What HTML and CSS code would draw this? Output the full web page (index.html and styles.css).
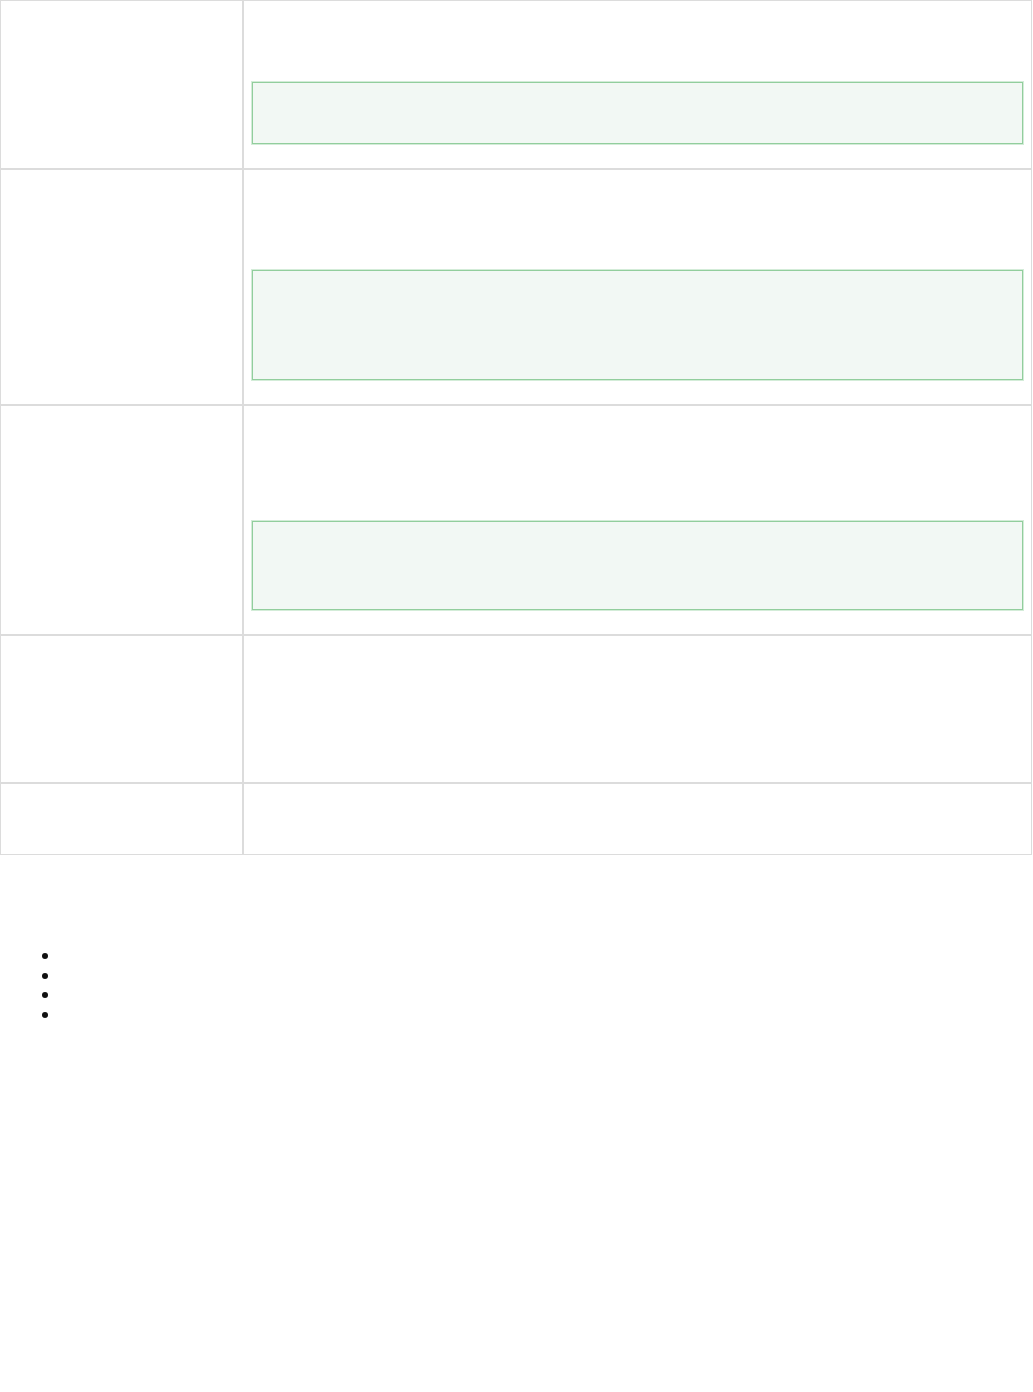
FILE: index.html
```html
<!DOCTYPE html>
<html lang="en">
<head>
<meta charset="utf-8">
<title>Table</title>
<link rel="stylesheet" href="styles.css">
</head>
<body>
<main class="page">
  <table class="grid">
    <tbody>
      <tr class="row row-1">
        <td class="label"></td>
        <td class="value">
          <div class="desc desc-1"></div>
          <div class="code code-1"></div>
        </td>
      </tr>
      <tr class="row row-2">
        <td class="label"></td>
        <td class="value">
          <div class="desc desc-2"></div>
          <div class="code code-2"></div>
        </td>
      </tr>
      <tr class="row row-3">
        <td class="label"></td>
        <td class="value">
          <div class="desc desc-3"></div>
          <div class="code code-3"></div>
        </td>
      </tr>
      <tr class="row row-4">
        <td class="label"></td>
        <td class="value"></td>
      </tr>
      <tr class="row row-5">
        <td class="label"></td>
        <td class="value"></td>
      </tr>
    </tbody>
  </table>

  <section class="notes">
    <ul class="list">
      <li class="item"></li>
      <li class="item"></li>
      <li class="item"></li>
      <li class="item"></li>
    </ul>
  </section>
</main>
</body>
</html>
```

FILE: styles.css
```css
html, body {
  margin: 0;
  padding: 0;
  background: #ffffff;
}

body {
  font-family: "Open Sans", "Liberation Sans", sans-serif;
  font-size: 13px;
  line-height: 1.5;
  color: #333333;
}

.page {
  width: 1032px;
}

.grid {
  width: 1032px;
  border-collapse: separate;
  border-spacing: 0;
  table-layout: fixed;
}

.grid td {
  border: 1px solid #dcdcdc;
  padding: 0 7px 23px 7px;
  vertical-align: top;
  box-sizing: border-box;
}

.grid .label {
  width: 243px;
}

.row-1 td { height: 169px; }
.row-2 td { height: 236px; }
.row-3 td { height: 230px; }
.row-4 td { height: 148px; }
.row-5 td { height: 72px; }

.desc-1 { height: 81px; }
.desc-2 { height: 100px; }
.desc-3 { height: 115px; }

.code {
  box-sizing: border-box;
  margin: 0 1px;
  background: #f2f8f4;
  border: 1px solid #92ce9d;
  box-shadow: 0 0 0 1px #d3ecd8;
}

.code-1 { height: 62px; }
.code-2 { height: 110px; }
.code-3 { height: 89px; }

.notes {
  padding: 92px 0 0 0;
}

.list {
  margin: 0;
  padding: 0 0 0 56px;
  list-style: none;
}

.item {
  position: relative;
  height: 19.5px;
}

.item::before {
  content: "";
  position: absolute;
  left: -14px;
  top: 6px;
  width: 6px;
  height: 6px;
  border-radius: 50%;
  background: #111111;
}
```
